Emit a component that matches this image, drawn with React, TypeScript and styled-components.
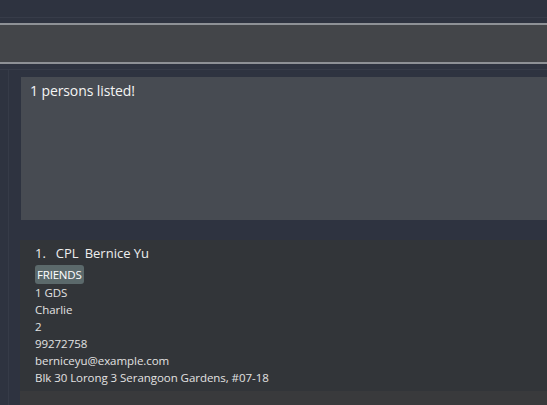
import React from 'react';
import styled, { createGlobalStyle } from 'styled-components';

const GlobalStyle = createGlobalStyle`
  html, body {
    margin: 0;
    padding: 0;
    background: #2e3340;
    overflow: hidden;
  }
  body {
    font-family: 'Open Sans', 'Noto Sans', sans-serif;
  }
`;

const Window = styled.div`
  width: 547px;
  height: 405px;
  display: flex;
  flex-direction: column;
  background: #2e3340;
  overflow: hidden;
`;

const MenuBar = styled.div`
  height: 17px;
  border-bottom: 1px solid #373c49;
`;

const CommandBox = styled.div`
  margin-top: 5px;
  height: 37px;
  background: #434549;
  border-top: 2px solid #8e9196;
  border-bottom: 2px solid #8e9196;
`;

const Body = styled.div`
  margin-top: 5px;
  border-top: 1px solid #373c49;
  flex: 1;
  display: flex;
`;

const SideGap = styled.div`
  width: 8px;
  border-right: 1px solid #363b48;
`;

const Main = styled.div`
  flex: 1;
  display: flex;
  flex-direction: column;
  padding-top: 7px;
  padding-left: 11px;
`;

const ResultBox = styled.div`
  height: 143px;
  margin-left: 1px;
  background: #474b52;
  color: #f4f4f4;
  font-size: 14px;
  letter-spacing: -0.1px;
  padding: 4px 9px;
  box-sizing: border-box;
`;

const ListView = styled.div`
  margin-top: 20px;
  flex: 1;
  background: #393a3c;
`;

const Card = styled.div`
  background: #323539;
  height: 151px;
  box-sizing: border-box;
  padding: 5px 15px;
  display: flex;
  flex-direction: column;
  align-items: flex-start;
  color: #e2e2e2;
`;

const NameLine = styled.div`
  font-size: 13px;
  color: #eeeeee;
  line-height: 17px;
  display: flex;
  gap: 6px;
`;

const Index = styled.span`
  margin-right: 4px;
`;

const Tag = styled.span`
  margin-top: 3px;
  background: #5b696b;
  color: #ffffff;
  font-size: 11.5px;
  letter-spacing: -0.2px;
  line-height: 19px;
  padding: 0 2px;
  border-radius: 3px;
`;

const Detail = styled.div`
  font-size: 11.5px;
  letter-spacing: -0.05px;
  line-height: 17px;
`;

const details = [
  '1 GDS',
  'Charlie',
  '2',
  '99272758',
  'berniceyu@example.com',
  'Blk 30 Lorong 3 Serangoon Gardens, #07-18',
];

export default function App(): JSX.Element {
  return (
    <>
      <GlobalStyle />
      <Window>
        <MenuBar />
        <CommandBox />
        <Body>
          <SideGap />
          <Main>
            <ResultBox>1 persons listed!</ResultBox>
            <ListView>
              <Card>
                <NameLine>
                  <Index>1.</Index>
                  <span>CPL</span>
                  <span>Bernice Yu</span>
                </NameLine>
                <Tag>FRIENDS</Tag>
                {details.map((d) => (
                  <Detail key={d}>{d}</Detail>
                ))}
              </Card>
            </ListView>
          </Main>
        </Body>
      </Window>
    </>
  );
}
